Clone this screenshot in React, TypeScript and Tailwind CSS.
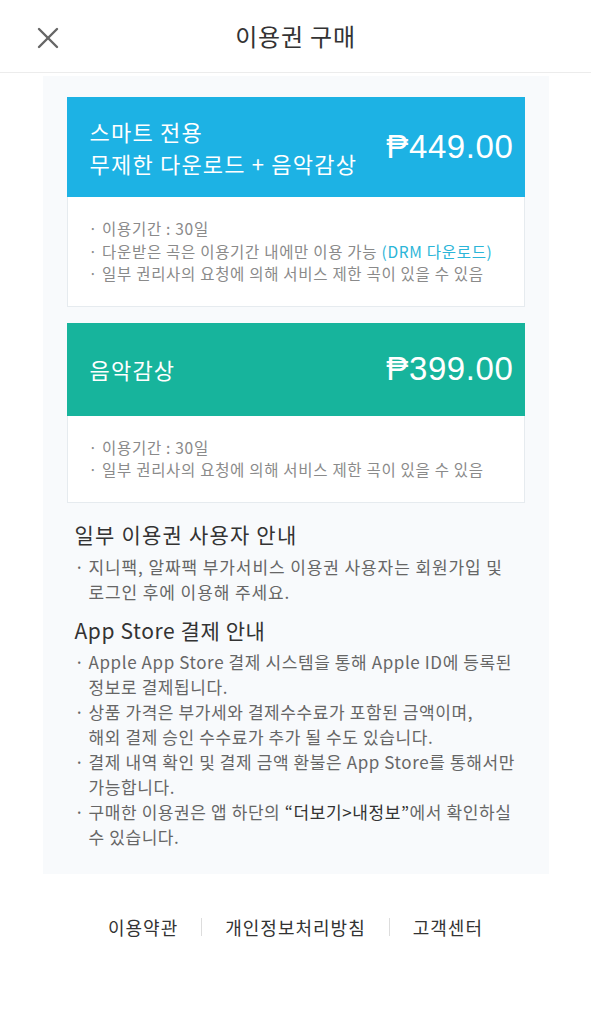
import { X } from "lucide-react";

const font = { fontFamily: '"Noto Sans CJK KR", "Noto Sans", sans-serif' };

const Card = ({
  color,
  title,
  price,
  lines,
  tall,
}: {
  color: string;
  title: React.ReactNode;
  price: string;
  lines: React.ReactNode[];
  tall?: boolean;
}) => (
  <div className="w-[458px] mx-auto bg-white border border-[#e6ebef]">
    <div
      className={`${color} ${tall ? "h-[100px]" : "h-[93px]"} -mx-px -mt-px flex items-center justify-between pl-[23px] pr-[11px] text-white`}
    >
      <div className="text-[22px] leading-[32px] tracking-[1.2px]">{title}</div>
      <div className="text-[33px] tracking-[0.6px]" style={{ fontFamily: '"Liberation Sans", "Noto Sans", sans-serif' }}>
        {price}
      </div>
    </div>
    <div className="pt-[20px] pb-[21px] pl-[21px] text-[15.5px] leading-[22.5px] tracking-[0.7px] text-[#8a8a8a]">
      {lines.map((l, i) => (
        <div key={i}>· {l}</div>
      ))}
    </div>
  </div>
);

const Bullet = ({ children }: { children: React.ReactNode }) => (
  <div className="flex">
    <span className="w-[14px] shrink-0">·</span>
    <span>{children}</span>
  </div>
);

export default function App() {
  return (
    <div className="w-[591px] h-[1024px] bg-white text-[#333]" style={font}>
      <header className="h-[73px] border-b border-[#ececec] flex items-center justify-center relative">
        <X className="absolute left-[30px] top-[20px] w-[36px] h-[36px] text-[#666]" strokeWidth={1.6} />
        <h1 className="text-[24px] tracking-[0.8px] text-[#333]">이용권 구매</h1>
      </header>

      <main className="mt-[3px] w-[506px] mx-auto bg-[#f8fafc] pt-[21px] pb-[25px]">
        <Card
          tall
          color="bg-[#1db2e4]"
          title={
            <>
              스마트 전용
              <br />
              무제한 다운로드 + 음악감상
            </>
          }
          price="₱449.00"
          lines={[
            "이용기간 : 30일",
            <>
              다운받은 곡은 이용기간 내에만 이용 가능{" "}
              <span className="text-[#2bb5d8]">(DRM 다운로드)</span>
            </>,
            "일부 권리사의 요청에 의해 서비스 제한 곡이 있을 수 있음",
          ]}
        />
        <div className="h-[16px]" />
        <Card
          color="bg-[#17b49c]"
          title="음악감상"
          price="₱399.00"
          lines={["이용기간 : 30일", "일부 권리사의 요청에 의해 서비스 제한 곡이 있을 수 있음"]}
        />

        <section className="px-[32px] mt-[16px]">
          <h2 className="text-[21px] leading-[30px] tracking-[1.2px] text-[#333]">일부 이용권 사용자 안내</h2>
          <div className="mt-[5px] text-[17px] leading-[25px] tracking-[0.9px] text-[#666]">
            <Bullet>
              지니팩, 알짜팩 부가서비스 이용권 사용자는 회원가입 및
              <br />
              로그인 후에 이용해 주세요.
            </Bullet>
          </div>

          <h2 className="mt-[11px] text-[21px] leading-[30px] tracking-[0.6px] text-[#333]">App Store 결제 안내</h2>
          <div className="mt-[4px] text-[17px] leading-[25px] tracking-[0.6px] text-[#666]">
            <Bullet>
              Apple App Store 결제 시스템을 통해 Apple ID에 등록된
              <br />
              정보로 결제됩니다.
            </Bullet>
            <Bullet>
              상품 가격은 부가세와 결제수수료가 포함된 금액이며,
              <br />
              해외 결제 승인 수수료가 추가 될 수도 있습니다.
            </Bullet>
            <Bullet>
              결제 내역 확인 및 결제 금액 환불은 App Store를 통해서만
              <br />
              가능합니다.
            </Bullet>
            <Bullet>
              구매한 이용권은 앱 하단의 <span className="text-[#333]">“더보기&gt;내정보”</span>에서 확인하실
              <br />
              수 있습니다.
            </Bullet>
          </div>
        </section>
      </main>

      <footer className="mt-[40px] flex items-center justify-center text-[18px] tracking-[1px] text-[#333]">
        <span>이용약관</span>
        <span className="mx-[23px] h-[18px] w-px bg-[#dddddd]" />
        <span>개인정보처리방침</span>
        <span className="mx-[23px] h-[18px] w-px bg-[#dddddd]" />
        <span>고객센터</span>
      </footer>
    </div>
  );
}
